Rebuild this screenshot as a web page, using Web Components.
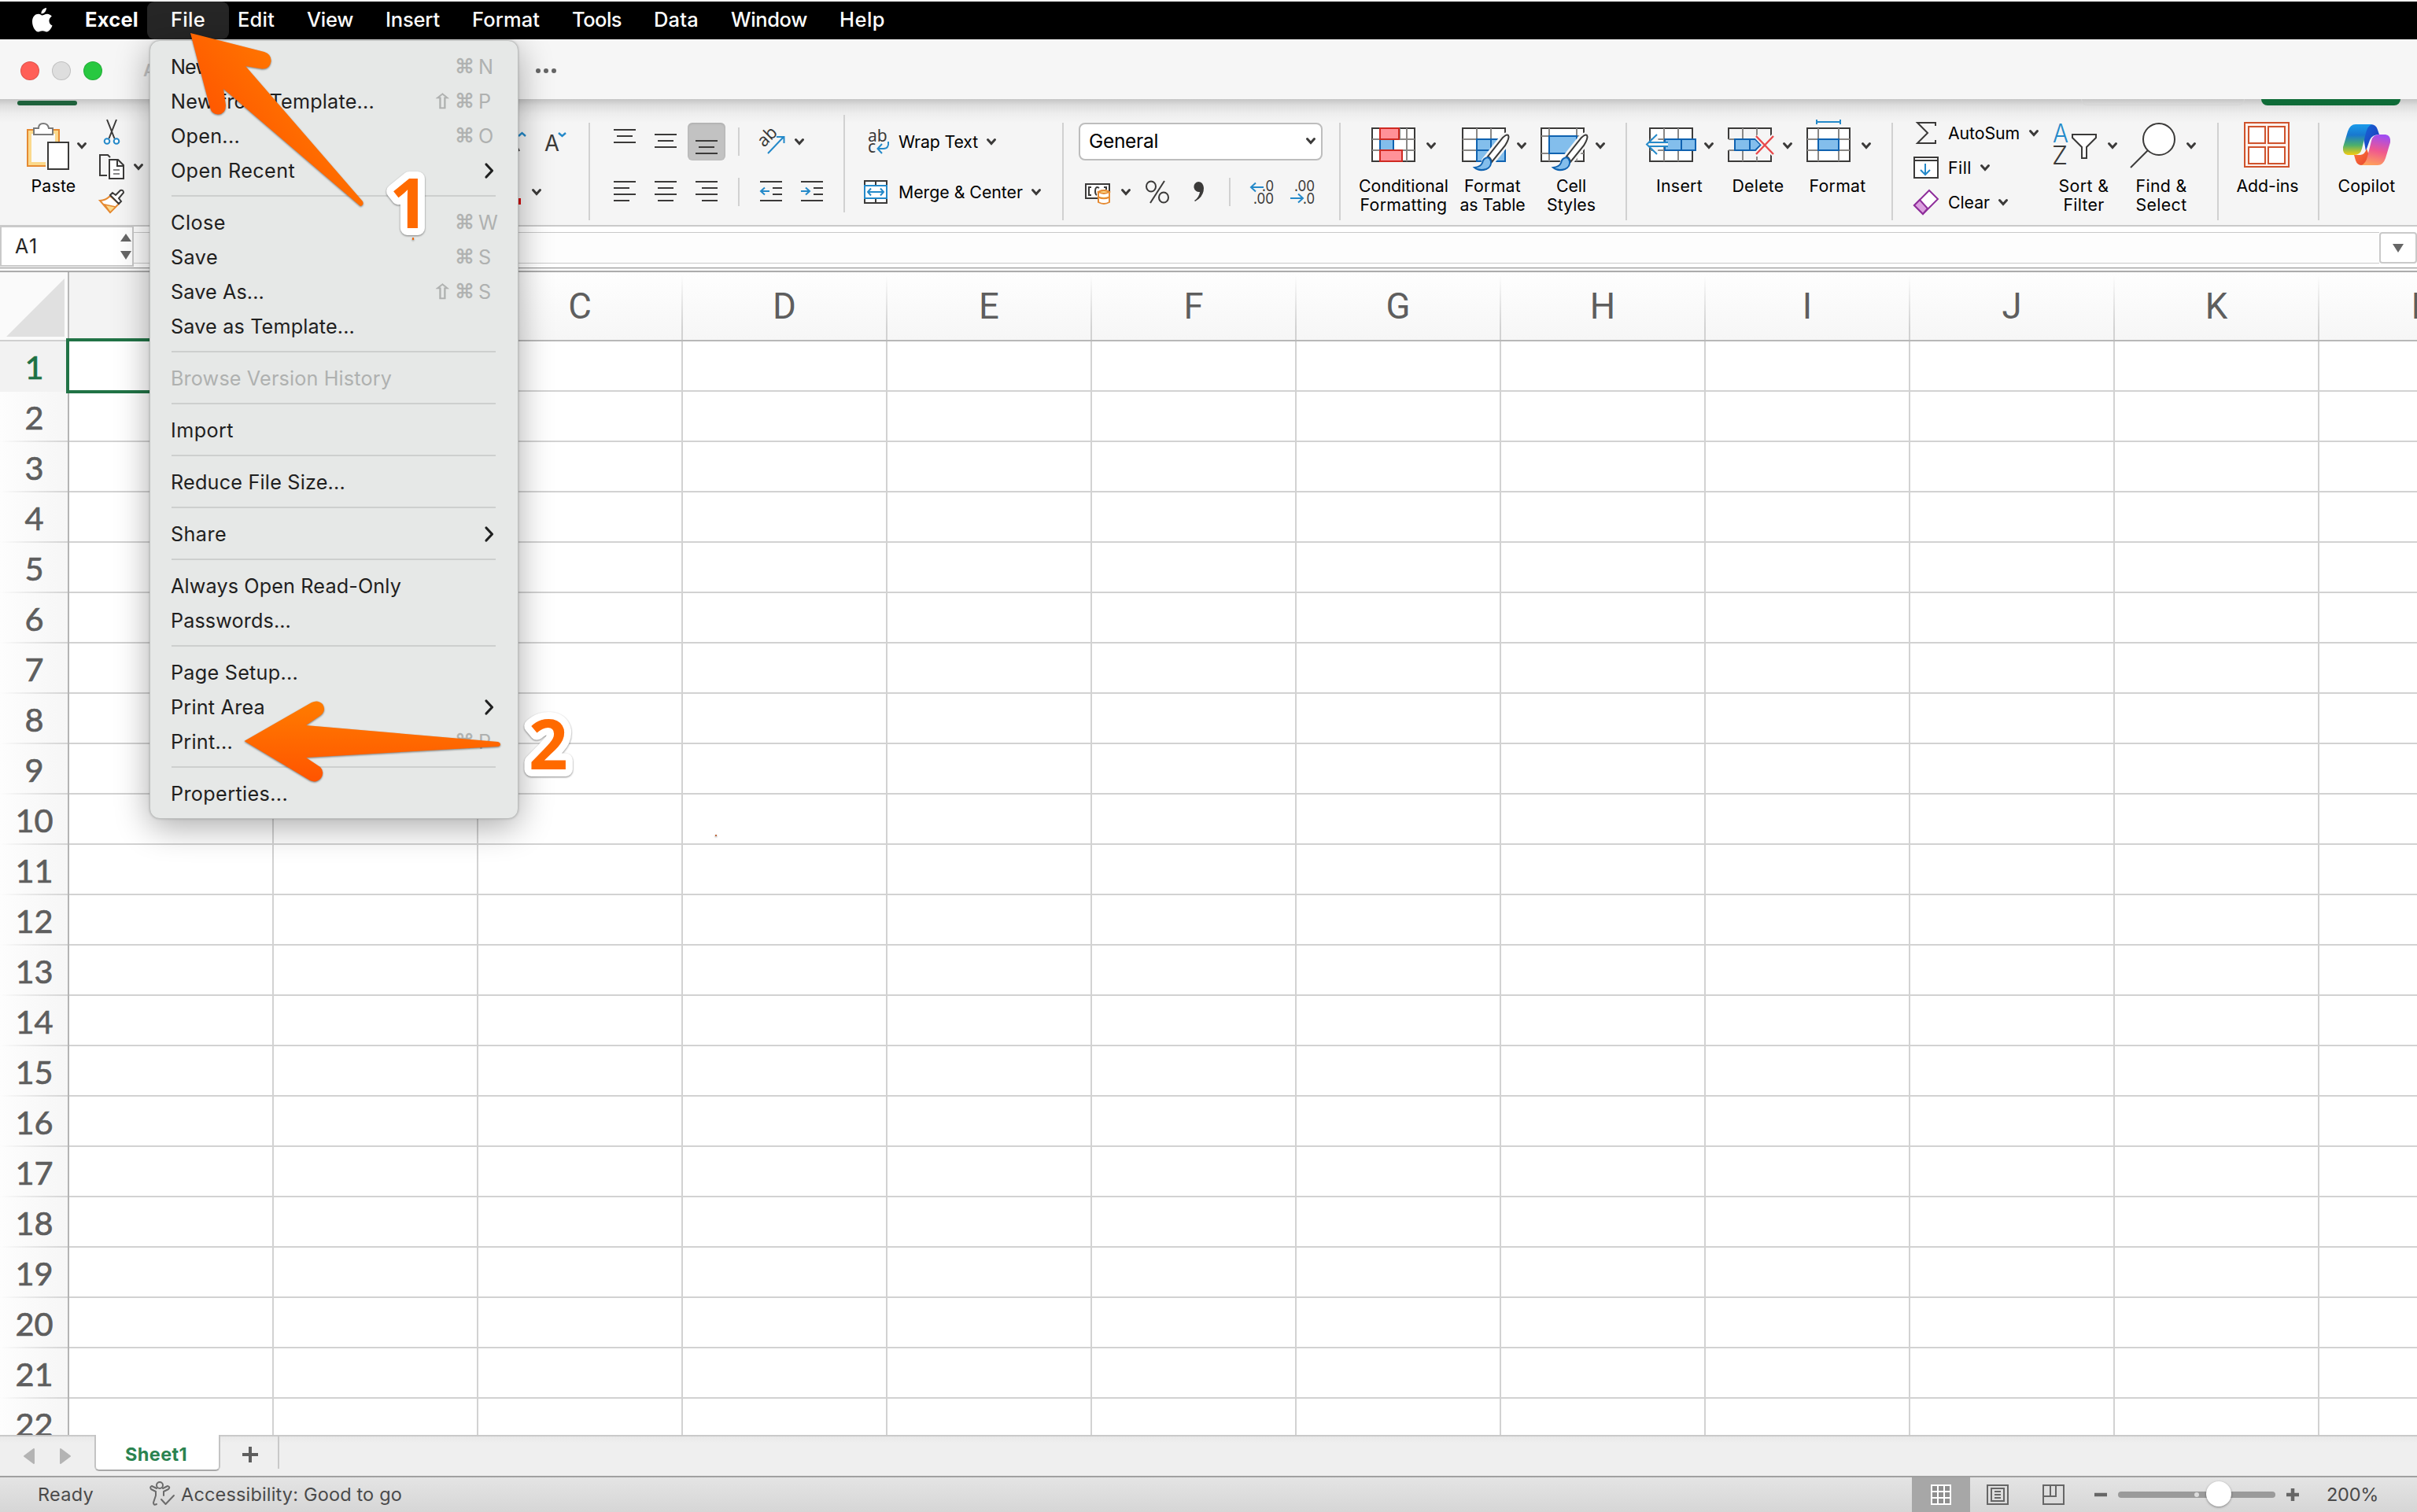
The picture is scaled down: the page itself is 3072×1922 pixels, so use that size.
<!DOCTYPE html>
<html lang="en">
<head>
<meta charset="utf-8">
<title>Excel</title>
<style>
  html, body { margin: 0; padding: 0; }
  body {
    width: 3072px;
    height: 1922px;
    overflow: hidden;
    background: #fff;
    font-family: Inter, "Liberation Sans", sans-serif;
  }
</style>
</head>
<body>
<excel-app></excel-app>

<script>
  // Small base class: every element sets its markup once in an open shadow root
  class BaseElement extends HTMLElement {
    connectedCallback() {
      if (this.shadowRoot) return;
      this.attachShadow({ mode: 'open' });
      this.shadowRoot.innerHTML = this.template();
      this.ready();
    }
    template() { return '<slot></slot>'; }
    ready() {}
  }

  const BLUE = '#2489c9';
  const DARK = '#3b3a39';

  // Lines of the alignment icons, as [x, y, width]
  const bars = (list) => list.map(([x, y, w]) => `<rect x="${x}" y="${y}" width="${w}" height="2" fill="${DARK}"/>`).join('');

  const brush = `
    <path d="M59 20 Q57 17 51 22 L28 51 Q26 55 30 58 L35 60 L38 56 L56 33 Q61 24 59 20Z" fill="#f5f5f5" stroke="#f5f5f5" stroke-width="5"/>
    <path d="M59 20 Q57 18 52 23 L33 47 Q37 49 38 54 L55 33 Q61 23 59 20Z" fill="#fff" stroke="${DARK}" stroke-width="2"/>
    <path d="M33 48 Q27 49 26 55 Q24 60 16 61 Q22 66 31 63 Q38 60 37 53 Q36 49 33 48Z" fill="#83beec" stroke="#0f62b0" stroke-width="2"/>`;

  // name: [width, height, svg markup]
  const ICONS = {
    apple: [28, 32, `<path fill="#fff" d="M19 1 C19 5 16 8.500 12.500 8.500 C12 4.500 15.500 1.200 19 1Z M13.500 10.500 C15 10.500 17 8.700 20 8.700 C22.500 8.700 24.500 10 25.800 11.800 C21 14.500 21.500 21.500 26.500 23.500 C25 27.500 22 31.500 19.300 31.500 C17.300 31.500 16.500 30.300 14 30.300 C11.500 30.300 10.500 31.500 8.700 31.500 C5 31.500 1 25 1 18.500 C1 12 5 8.800 8.800 8.800 C11 8.800 12.500 10.500 13.500 10.500Z"/>`],
    chevron: [12, 8, `<path d="M1.500 1.500 L6 6.500 L10.500 1.500" fill="none" stroke="${DARK}" stroke-width="3" stroke-linecap="round"/>`],
    submenu: [12, 20, `<path d="M2 2 L9.500 10 L2 18" fill="none" stroke="#1f2020" stroke-width="3.200" stroke-linecap="round" stroke-linejoin="round"/>`],
    dots: [28, 8, `<g fill="#666"><circle cx="4" cy="4" r="3"/><circle cx="14" cy="4" r="3"/><circle cx="24" cy="4" r="3"/></g>`],
    paste: [54, 64, `
      <path d="M1 13 H41 V28 H36 V18 H6 V54 H24 V59 H1Z" fill="#fbd98c"/>
      <path d="M6 18 H36 V28 H26 V54 H6Z" fill="#fafafa"/>
      <path d="M41 29 V13 H1 V59 H24" fill="none" stroke="#e58a32" stroke-width="2"/>
      <path d="M9 11 H15 Q15 5 21 5 Q27 5 28 11 H33 V19 H9Z" fill="#fff" stroke="#7a7a7a" stroke-width="2"/>
      <rect x="27" y="29" width="26" height="34" fill="#fff" stroke="${DARK}" stroke-width="2"/>`],
    cut: [20, 32, `
      <path d="M4 0 L13.500 24 M16 0 L6.500 24" stroke="${DARK}" stroke-width="2" fill="none"/>
      <g fill="#fff" stroke="${BLUE}" stroke-width="2"><circle cx="4" cy="27.500" r="3.300"/><circle cx="16" cy="27.500" r="3.300"/></g>`],
    copy: [32, 32, `
      <path d="M10 27 H1 V1 H11 L14 4" fill="none" stroke="${DARK}" stroke-width="2"/>
      <path d="M13 7 H24 L31 14 V31 H13Z M23 7 V15 H31" fill="#fff" stroke="${DARK}" stroke-width="2"/>
      <path d="M18 20 H26 M18 25 H26" stroke="#888" stroke-width="2"/>`],
    painter: [32, 30, `
      <path d="M14 8 L25 18 L14 29 L1 14Q8 14 14 8" fill="#fff" stroke="#e58a32" stroke-width="2"/>
      <path d="M7 19 L21 22 L14 29Z" fill="#fbd98c" stroke="#e58a32" stroke-width="1.500"/>
      <path d="M14 7 L17 4 L21 7 L27 1 Q31 0 31 4 L25 11 L28 15 L25 18Z" fill="#fff" stroke="${DARK}" stroke-width="2"/>`],
    shrink: [28, 26, `<text x="0" y="25" font-family="Inter" font-size="28" textLength="19" lengthAdjust="spacingAndGlyphs" fill="${DARK}">A</text><path d="M18 2 L22.500 6 L27 2" fill="none" stroke="${BLUE}" stroke-width="2.400"/>`],
    grow: [12, 26, `<path d="M0 21 L2 25" stroke="${DARK}" stroke-width="2"/><path d="M1 6 L5.500 2 L10 6" fill="none" stroke="${BLUE}" stroke-width="2.400"/>`],
    alignTop: [28, 48, bars([[0, 8, 28], [4, 16, 20], [0, 24, 28]])],
    alignMiddle: [28, 48, bars([[0, 14, 28], [4, 22, 20], [0, 30, 28]])],
    alignBottom: [28, 48, bars([[0, 22, 28], [4, 30, 20], [0, 38, 28]])],
    alignLeft: [28, 48, bars([[0, 10, 28], [0, 18, 20], [0, 26, 28], [0, 34, 20]])],
    alignCenter: [28, 48, bars([[0, 10, 28], [4, 18, 20], [0, 26, 28], [4, 34, 20]])],
    alignRight: [28, 48, bars([[0, 10, 28], [8, 18, 20], [0, 26, 28], [8, 34, 20]])],
    outdent: [28, 48, bars([[0, 10, 28], [16, 18, 12], [16, 26, 12], [0, 34, 28]]) + `<path d="M12 23 H1 M6 18.500 L1 23 L6 27.500" fill="none" stroke="${BLUE}" stroke-width="2"/>`],
    indent: [28, 48, bars([[0, 10, 28], [16, 18, 12], [16, 26, 12], [0, 34, 28]]) + `<path d="M0 23 H11 M6 18.500 L11 23 L6 27.500" fill="none" stroke="${BLUE}" stroke-width="2"/>`],
    orient: [34, 32, `
      <text x="0" y="0" transform="translate(7,24) rotate(-45)" font-family="Noto Sans" font-size="22" fill="${DARK}">ab</text>
      <path d="M12 31 L32 10 M23 10 H32.500 V18" fill="none" stroke="${BLUE}" stroke-width="2"/>`],
    wrap: [30, 32, `
      <text x="0" y="16" font-family="Noto Sans" font-size="21" fill="${DARK}">ab</text>
      <text x="0" y="30" font-family="Noto Sans" font-size="21" fill="${DARK}">c</text>
      <path d="M26 16 Q27 25 20 25 H13 M18 19 L12.500 25 L18 31" fill="none" stroke="${BLUE}" stroke-width="2"/>`],
    merge: [30, 30, `
      <path d="M1 1 H29 V29 H1Z M15 1 V7 M15 23 V29" fill="#fff" stroke="${DARK}" stroke-width="2"/>
      <rect x="1" y="7" width="28" height="16" fill="#fff" stroke="${BLUE}" stroke-width="2"/>
      <path d="M5 15 H25 M9 10.500 L5 15 L9 19.500 M21 10.500 L25 15 L21 19.500" fill="none" stroke="${BLUE}" stroke-width="2"/>`],
    currency: [32, 28, `
      <rect x="1" y="2" width="30" height="18" fill="#fff" stroke="${DARK}" stroke-width="2"/>
      <path d="M8 6 H5 V16 H8 M24 6 H27 V9 M18 7 Q13 4 13 11 Q13 15 15 16" fill="none" stroke="${DARK}" stroke-width="2"/>
      <path d="M17 12 Q24 8 31 12 V25 Q24 29 17 25Z" fill="#fff" stroke="#e58a32" stroke-width="2"/>
      <path d="M17 12 Q24 16 31 12 Q24 8 17 12Z M17 18.500 Q24 22 31 18.500" fill="#fbd98c" stroke="#e58a32" stroke-width="2"/>`],
    percent: [32, 30, `<g fill="none" stroke="${DARK}" stroke-width="2"><ellipse cx="7" cy="8" rx="6" ry="6.500"/><ellipse cx="23" cy="22" rx="6" ry="6.500"/><path d="M24 1 L6 29"/></g>`],
    comma: [14, 28, `<path d="M7 1 A6.500 6.500 0 1 0 9 14 Q8 21 2 25 L3 26 Q14 20 14 9 Q13 1 7 1Z" fill="${DARK}"/>`],
    moreDecimal: [31, 30, `
      <g font-family="Inter" font-size="19" fill="${DARK}"><text x="16" y="14" textLength="15" lengthAdjust="spacingAndGlyphs">.0</text><text x="5" y="30" textLength="26" lengthAdjust="spacingAndGlyphs">.00</text></g>
      <path d="M18 9 H2 M8 3.500 L2 9 L8 14.500" fill="none" stroke="${BLUE}" stroke-width="2"/>`],
    lessDecimal: [31, 30, `
      <g font-family="Inter" font-size="19" fill="${DARK}"><text x="5" y="14" textLength="26" lengthAdjust="spacingAndGlyphs">.00</text><text x="16" y="30" textLength="15" lengthAdjust="spacingAndGlyphs">.0</text></g>
      <path d="M0 23 H16 M10 17.500 L16 23 L10 28.500" fill="none" stroke="${BLUE}" stroke-width="2"/>`],
    conditional: [56, 64, `
      <rect x="1" y="11" width="54" height="42" fill="#fff" stroke="${DARK}" stroke-width="2"/>
      <path d="M1 25 H55 M1 39 H55 M11 11 V53 M36 11 V25 M45 11 V53" stroke="#8a8886" stroke-width="2"/>
      <rect x="29" y="26" width="15" height="12" fill="#fff"/>
      <rect x="11" y="25" width="17" height="14" fill="#83beec" stroke="#0f62b0" stroke-width="2"/>
      <path d="M11 11 H35 V25 H11Z M11 39 H39 V53 H11Z" fill="#ff9198" stroke="#cf2a22" stroke-width="2"/>`],
    formatTable: [56, 64, `
      <rect x="1" y="11" width="54" height="42" fill="#fff" stroke="${DARK}" stroke-width="2"/>
      <path d="M1 25 H19 M1 39 H19 M19 11 V53 M37 11 V25" stroke="#8a8886" stroke-width="2"/>
      <path d="M19 25 H55 V53 H19Z M19 39 H55 M37 25 V53" fill="#83beec" stroke="#0f62b0" stroke-width="2"/>${brush}`],
    cellStyles: [56, 64, `
      <rect x="1" y="11" width="54" height="42" fill="#fff" stroke="${DARK}" stroke-width="2"/>
      <path d="M1 21 H55 M1 43 H55 M11 11 V53 M46 11 V53" stroke="#8a8886" stroke-width="2"/>
      <rect x="11" y="21" width="35" height="22" fill="#83beec" stroke="#0f62b0" stroke-width="2"/>${brush}`],
    insertCells: [56, 64, `
      <rect x="1" y="11" width="54" height="42" fill="#fff" stroke="${DARK}" stroke-width="2"/>
      <path d="M1 25 H55 M1 39 H55 M19 11 V53 M37 11 V53" stroke="#8a8886" stroke-width="2"/>
      <path d="M20 25 H59 V39 H20Z M41 25 V39" fill="#83beec" stroke="#0f62b0" stroke-width="2"/>
      <path d="M10 18 L-2 31.500 L10 45 L12 35 H24 V28 H12Z" fill="#f5f5f5"/>
      <path d="M24 29 H0 M24 34 H0 M10 19 L-3 31.500 L10 44" fill="none" stroke="${BLUE}" stroke-width="2"/>`],
    deleteCells: [56, 64, `
      <path d="M1 25 V11 H55 V22 M1 39 V53 H55 V44" fill="none" stroke="${DARK}" stroke-width="2"/>
      <path d="M1 25 H37 M1 39 H37 M19 11 V25 M37 11 V25 M19 39 V53 M37 47 V53" stroke="#8a8886" stroke-width="2"/>
      <path d="M9 25 H35 L42 32 L35 39 H9Z M28 25 V39" fill="#83beec" stroke="#0f62b0" stroke-width="2"/>
      <path d="M36 21 L58 44 M58 21 L36 44" stroke="#f5f5f5" stroke-width="6"/>
      <path d="M36 21 L58 44 M58 21 L36 44" stroke="#e8484b" stroke-width="2.400"/>`],
    formatCells: [56, 64, `
      <path d="M13 3 H43 M13 0 V6 M43 0 V6" stroke="${BLUE}" stroke-width="2"/>
      <rect x="1" y="11" width="54" height="42" fill="#fff" stroke="${DARK}" stroke-width="2"/>
      <path d="M1 25 H55 M1 39 H55 M15 11 V53 M41 11 V53" stroke="#8a8886" stroke-width="2"/>
      <rect x="15" y="25" width="26" height="14" fill="#83beec" stroke="#0f62b0" stroke-width="2"/>`],
    sum: [32, 28, `<path d="M28 5 V1 H5 L18 14 L5 27 H28 V23" fill="none" stroke="${DARK}" stroke-width="2"/>`],
    fill: [32, 28, `
      <path d="M1 1 H31 V27 H1Z M1 5 H31" fill="#fff" stroke="${DARK}" stroke-width="2"/>
      <path d="M15 9 V23 M9 17 L15 23 L21 17" fill="none" stroke="${BLUE}" stroke-width="2"/>`],
    clear: [32, 32, `
      <path d="M20 1 L31 12 L12 31 L1 20Z" fill="#fff" stroke="#8f2f9b" stroke-width="2"/>
      <path d="M8 13 L18 24 L12 31 L1 20Z" fill="#dba0df" stroke="#8f2f9b" stroke-width="2"/>`],
    sort: [56, 64, `
      <text x="0" y="29" font-family="Inter" font-size="32" font-weight="300" textLength="20" lengthAdjust="spacingAndGlyphs" fill="${BLUE}">A</text>
      <text x="-1" y="57" font-family="Inter" font-size="32" font-weight="300" textLength="20" lengthAdjust="spacingAndGlyphs" fill="${DARK}">Z</text>
      <path d="M25 19 H55 V23 L43 35 V49 H37 V35 L25 23Z" fill="#fff" stroke="${DARK}" stroke-width="2"/>`],
    find: [58, 64, `
      <circle cx="37" cy="25" r="20" fill="#fff" stroke="${DARK}" stroke-width="2"/>
      <path d="M23 39 L1 61" stroke="${DARK}" stroke-width="2"/>`],
    addins: [58, 64, `
      <g fill="#fdf1ec" stroke="#cf532d" stroke-width="2"><rect x="1" y="4" width="56" height="56"/>
      <path fill="#fff" d="M6 9 H27 V30 H6Z M31 9 H52 V30 H31Z M6 35 H27 V56 H6Z M31 35 H52 V56 H31Z"/></g>`],
    copilot: [60, 64, `
      <defs>
        <linearGradient id="l" x1="0" y1="0" x2="0" y2="1"><stop offset="0" stop-color="#1a9bea"/><stop offset=".35" stop-color="#1878cf"/><stop offset=".68" stop-color="#4caf6c"/><stop offset="1" stop-color="#f5cc10"/></linearGradient>
        <linearGradient id="r" x1=".5" y1="0" x2=".3" y2="1"><stop offset="0" stop-color="#a24df0"/><stop offset=".5" stop-color="#f0588f"/><stop offset="1" stop-color="#ffa25a"/></linearGradient>
        <linearGradient id="t" x1="0" y1="0" x2="1" y2="1"><stop offset="0" stop-color="#1668d6"/><stop offset="1" stop-color="#1f35bb"/></linearGradient>
        <linearGradient id="b" x1="0" y1="0" x2="1" y2="1"><stop offset="0" stop-color="#ff7a3c"/><stop offset="1" stop-color="#e6432f"/></linearGradient>
      </defs>
      <g transform="translate(0,6)">
        <path fill="url(#t)" d="M28 0 H35 Q42 0 44 7 L46 13 Q37 13 34 20 L29 34 L25 12Z"/>
        <path fill="url(#b)" d="M14 39 H22 Q28 38 30 31 L34 42 L30 52 H24 Q18 52 16 46Z"/>
        <path fill="url(#l)" d="M16 0 H37 Q31 2 29 11 L24 31 Q22 39 14 39 H6 Q-1 38 0 29 L6 9 Q9 0 16 0Z"/>
        <path fill="url(#r)" d="M44 52 H23 Q29 50 31 41 L36 21 Q38 13 46 13 H54 Q61 14 60 23 L54 43 Q51 52 44 52Z"/>
      </g>`],
    up: [14, 10, `<path d="M7 0 L14 10 H0Z" fill="#666"/>`],
    down: [14, 11, `<path d="M0 0 H14 L7 11Z" fill="#666"/>`],
    prev: [14, 20, `<path d="M13 1 V19 L1 10Z" fill="#b4b4b4" stroke="#b4b4b4" stroke-width="2" stroke-linejoin="round"/>`],
    next: [14, 20, `<path d="M1 1 V19 L13 10Z" fill="#b4b4b4" stroke="#b4b4b4" stroke-width="2" stroke-linejoin="round"/>`],
    plus: [20, 20, `<path d="M10 0 V20 M0 10 H20" stroke="#5e5e5e" stroke-width="4"/>`],
    zoomIn: [16, 16, `<path d="M8 0 V16 M0 8 H16" stroke="#666" stroke-width="4.500"/>`],
    zoomOut: [16, 16, `<path d="M0 8 H16" stroke="#666" stroke-width="4.500"/>`],
    person: [32, 32, `
      <g fill="none" stroke="#6b6b6b" stroke-width="2" stroke-linecap="round" stroke-linejoin="round">
      <circle cx="13" cy="5" r="4"/>
      <path d="M9 9 L3 6 Q0 7 2 10 L8 13 V18 L5 27 Q5 31 9 29 M17 9 L23 6 Q27 7 24 10 L18 13 V18"/>
      <path d="M15 23 L20.500 29 L31 18"/></g>`],
    normalView: [26, 26, `<rect x="1" y="1" width="24" height="24" rx="1" fill="#8e8e8e"/><path d="M1 1 H25 V25 H1Z M1 9 H25 M1 17 H25 M9 1 V25 M17 1 V25" fill="none" stroke="#fff" stroke-width="2"/>`],
    layoutView: [28, 26, `<path d="M1 1 H27 V25 H1Z M6 5 H22 V21 H6Z M10 9 H18 M10 13 H18 M10 17 H18" fill="none" stroke="#666" stroke-width="2"/>`],
    breakView: [28, 26, `<path d="M1 1 H27 V25 H1Z M10 1 V14 M1 15 H17 V1" fill="none" stroke="#666" stroke-width="2"/>`]
  };

  class UiIcon extends BaseElement {
    template() {
      const [w, h, art] = ICONS[this.getAttribute('name')];
      return `
        <style>
          :host { display: block; flex: none; width: ${w}px; height: ${h}px; }
          svg { display: block; overflow: visible; }
        </style>
        <svg width="${w}" height="${h}" viewBox="0 0 ${w} ${h}">${art}</svg>`;
    }
  }

  // Text label. The w attribute is its measured width; tracking is adjusted to reach it.
  class UiLabel extends BaseElement {
    template() {
      return `
        <style>
          :host { display: block; flex: none; white-space: nowrap; width: max-content; }
        </style>
        <slot></slot>`;
    }
    ready() {
      const width = Number(this.getAttribute('w'));
      if (!width) return;
      const natural = this.getBoundingClientRect().width;
      this.style.letterSpacing = ((width - natural) / this.textContent.length).toFixed(3) + 'px';
      this.style.width = width + 'px';
    }
  }

  class MacMenuBar extends BaseElement {
    template() {
      const items = [['File', 44], ['Edit', 47], ['View', 59], ['Insert', 69], ['Format', 86], ['Tools', 63], ['Data', 57], ['Window', 97], ['Help', 58]];
      return `
        <style>
          :host { display: flex; align-items: center; gap: 41px; height: 48px; border-top: 2px solid #f2f2f2; background: #000; color: #fff; font-size: 25.500px; font-weight: 500; line-height: 46px; }
          ui-icon { margin: -2px 0 0 40px; }
          .app { font-weight: 700; margin: -2px 0 0 -1px; }
          .item { height: 48px; }
          .open { padding: 0 30px; margin: 0 -30px; background: #262626; border-radius: 9px; }
        </style>
        <ui-icon name="apple"></ui-icon>
        <ui-label class="app" w="68">Excel</ui-label>
        ${items.map(([text, w], i) => `<div class="item ${i ? '' : 'open'}"><ui-label w="${w}">${text}</ui-label></div>`).join('')}`;
    }
  }

  class TitleBar extends BaseElement {
    template() {
      return `
        <style>
          :host { display: flex; align-items: center; height: 76px; background: #f6f6f6; }
          i { width: 22px; height: 22px; border-radius: 50%; border: 1px solid #0002; margin-right: 16px; }
          .lights { display: flex; padding: 4px 0 0 26px; width: 156px; }
          .auto { width: 498px; font-size: 22px; font-weight: 600; color: #c4c4c4; padding-top: 2px; }
        </style>
        <div class="lights"><i style="background:#ff5f57"></i><i style="background:#dedede"></i><i style="background:#28c840"></i></div>
        <div class="auto">A</div>
        <ui-icon name="dots" style="margin-top:3px"></ui-icon>`;
    }
  }

  // Large ribbon button: icon and arrow over a centred caption
  class RibbonButton extends BaseElement {
    template() {
      const arrow = this.hasAttribute('arrow');
      return `
        <style>
          :host { display: flex; flex: none; flex-direction: column; align-items: center; padding-top: 6px; }
          .top { display: flex; align-items: center; gap: ${this.getAttribute('gap') || 14}px; height: 64px; }
          .top ui-icon + ui-icon { margin-top: 2px; }
          .caption { display: flex; flex-direction: column; align-items: center; width: 0; margin-top: 8px; line-height: 24px; font-size: 21.300px; margin-left: ${this.getAttribute('shift') || 0}px; }
        </style>
        <div class="top"><ui-icon name="${this.getAttribute('icon')}"></ui-icon>${arrow ? '<ui-icon name="chevron"></ui-icon>' : ''}</div>
        <div class="caption"><slot></slot></div>`;
    }
  }

  class RibbonBar extends BaseElement {
    template() {
      const at = (x) => `style="margin-left:${x}px"`;
      return `
        <style>
          :host { display: block; height: 160px; border-bottom: 2px solid #cacaca; background: linear-gradient(#c4c4c4, #dedede 8px, #ededed 18px, #f5f5f5 30px); color: #000; font-size: 21.300px; font-weight: 400; }
          .tabs { display: flex; height: 20px; align-items: flex-start; }
          .tabs b { height: 6px; width: 76px; margin: 2px 0 0 22px; border-radius: 3px; background: #1e613b; }
          .tabs .comments { width: 206px; height: 7px; margin: 0 0 0 2547px; border: 1px solid #d4d4d4; border-top: 0; border-radius: 0 0 12px 12px; }
          .tabs .share { width: 177px; height: 8px; margin: 0 0 0 21px; background: #0e6b37; border-radius: 0 0 10px 10px; }
          .groups, .group, .row { display: flex; }
          .group { flex: none; box-sizing: border-box; height: 138px; }
          .rows { flex-direction: column; padding-top: 10px; gap: 16px; }
          .row { height: 48px; align-items: center; }
          .sep { flex: none; width: 2px; height: 124px; margin-top: 10px; background: #d1d1d1; }
          .sep.high { margin-top: 0; }
          .mini { width: 2px; height: 36px; background: #d1d1d1; }
          .clip { display: flex; flex-direction: column; padding-top: 6px; gap: 12px; }
          .clip .row { height: 32px; }
          .on { background: #c2c2c2; border-radius: 6px; padding: 0 10px; height: 48px; box-shadow: inset 0 1px 3px #0002; }
          .select { display: flex; align-items: center; box-sizing: border-box; width: 310px; height: 48px; border: 2px solid #bdbdbd; border-radius: 8px; background: #fff; padding: 0 7px 2px 11px; justify-content: space-between; font-size: 24.500px; }
          .edit { display: flex; flex-direction: column; width: 203px; padding-top: 1px; }
          .edit .row { height: 44px; }
          .edit ui-label { margin-top: -1px; }
          .red { width: 4px; height: 8px; background: #d80f10; margin-top: 24px; }
        </style>
        <div class="tabs"><b></b><span class="comments"></span><span class="share"></span></div>
        <div class="groups">
          <div class="group" style="width:748px">
            <ribbon-button icon="paste" arrow gap="10" shift="-8" ${at(34)}><ui-label w="57">Paste</ui-label></ribbon-button>
            <div class="clip" ${at(16)}>
              <div class="row"><ui-icon name="cut" ${at(6)}></ui-icon></div>
              <div class="row"><ui-icon name="copy"></ui-icon><ui-icon name="chevron" ${at(12)}></ui-icon></div>
              <div class="row"><ui-icon name="painter"></ui-icon></div>
            </div>
            <div class="group rows" ${at(476)}>
              <div class="row"><ui-icon name="grow"></ui-icon><ui-icon name="shrink" ${at(22)}></ui-icon></div>
              <div class="row"><span class="red"></span><ui-icon name="chevron" ${at(14)}></ui-icon></div>
            </div>
          </div>
          <div class="sep"></div>
          <div class="group rows" style="width:322px;padding-left:30px">
            <div class="row">
              <ui-icon name="alignTop"></ui-icon><ui-icon name="alignMiddle" ${at(24)}></ui-icon>
              <div class="on" ${at(14)}><ui-icon name="alignBottom"></ui-icon></div>
              <span class="mini" ${at(16)}></span>
              <ui-icon name="orient" ${at(24)}></ui-icon><ui-icon name="chevron" ${at(12)}></ui-icon>
            </div>
            <div class="row">
              <ui-icon name="alignLeft"></ui-icon><ui-icon name="alignCenter" ${at(24)}></ui-icon><ui-icon name="alignRight" ${at(24)}></ui-icon>
              <span class="mini" ${at(26)}></span>
              <ui-icon name="outdent" ${at(26)}></ui-icon><ui-icon name="indent" ${at(24)}></ui-icon>
            </div>
          </div>
          <div class="sep high"></div>
          <div class="group rows" style="width:276px;padding-left:24px">
            <div class="row"><ui-icon name="wrap" ${at(5)}></ui-icon><ui-label w="101" ${at(9)}>Wrap Text</ui-label><ui-icon name="chevron" ${at(11)}></ui-icon></div>
            <div class="row"><ui-icon name="merge"></ui-icon><ui-label w="158" ${at(14)}>Merge &amp; Center</ui-label><ui-icon name="chevron" ${at(11)}></ui-icon></div>
          </div>
          <div class="sep"></div>
          <div class="group rows" style="width:350px;padding-left:19px">
            <div class="row"><div class="select"><ui-label w="88">General</ui-label><ui-icon name="chevron"></ui-icon></div></div>
            <div class="row">
              <ui-icon name="currency" style="margin:4px 0 0 8px"></ui-icon><ui-icon name="chevron" ${at(14)}></ui-icon>
              <ui-icon name="percent" ${at(19)}></ui-icon><ui-icon name="comma" ${at(28)}></ui-icon>
              <span class="mini" ${at(32)}></span>
              <ui-icon name="moreDecimal" ${at(24)}></ui-icon><ui-icon name="lessDecimal" ${at(21)}></ui-icon>
            </div>
          </div>
          <div class="sep"></div>
          <div class="group" style="width:362px;padding-left:39px">
            <ribbon-button icon="conditional" arrow><ui-label w="114">Conditional</ui-label><ui-label w="111">Formatting</ui-label></ribbon-button>
            <ribbon-button icon="formatTable" arrow shift="-4" ${at(33)}><ui-label w="72">Format</ui-label><ui-label w="83">as Table</ui-label></ribbon-button>
            <ribbon-button icon="cellStyles" arrow shift="-4" ${at(18)}><ui-label w="38">Cell</ui-label><ui-label w="62">Styles</ui-label></ribbon-button>
          </div>
          <div class="sep"></div>
          <div class="group" style="width:336px;padding-left:28px">
            <ribbon-button icon="insertCells" arrow shift="-5"><ui-label w="59">Insert</ui-label></ribbon-button>
            <ribbon-button icon="deleteCells" arrow shift="-5" ${at(18)}><ui-label w="66">Delete</ui-label></ribbon-button>
            <ribbon-button icon="formatCells" arrow shift="-3" ${at(18)}><ui-label w="72">Format</ui-label></ribbon-button>
          </div>
          <div class="sep"></div>
          <div class="group" style="width:412px">
            <div class="edit">
              <div class="row"><ui-icon name="sum" ${at(26)}></ui-icon><ui-label w="91" ${at(12)}>AutoSum</ui-label><ui-icon name="chevron" ${at(12)}></ui-icon></div>
              <div class="row"><ui-icon name="fill" ${at(26)}></ui-icon><ui-label w="30" ${at(12)}>Fill</ui-label><ui-icon name="chevron" ${at(11)}></ui-icon></div>
              <div class="row"><ui-icon name="clear" ${at(26)}></ui-icon><ui-label w="53" ${at(12)}>Clear</ui-label><ui-icon name="chevron" ${at(11)}></ui-icon></div>
            </div>
            <ribbon-button icon="sort" arrow shift="-3"><ui-label w="64">Sort &amp;</ui-label><ui-label w="52">Filter</ui-label></ribbon-button>
            <ribbon-button icon="find" arrow shift="-4" ${at(16)}><ui-label w="65">Find &amp;</ui-label><ui-label w="65">Select</ui-label></ribbon-button>
          </div>
          <div class="sep"></div>
          <div class="group" style="width:126px;padding-left:32px">
            <ribbon-button icon="addins" shift="2"><ui-label w="79">Add-ins</ui-label></ribbon-button>
          </div>
          <div class="sep"></div>
          <div class="group" style="width:124px;padding-left:30px">
            <ribbon-button icon="copilot"><ui-label w="73">Copilot</ui-label></ribbon-button>
          </div>
        </div>`;
    }
  }

  class FormulaBar extends BaseElement {
    template() {
      return `
        <style>
          :host { display: flex; align-items: flex-start; height: 52px; background: #fff; }
          .name { display: flex; align-items: center; justify-content: space-between; box-sizing: border-box; width: 170px; height: 51px; border: 2px solid #c9c9c9; border-top-width: 1px; padding: 0 1px 0 17px; font-size: 25px; color: #262626; }
          .steps { display: flex; flex-direction: column; gap: 12px; }
          .input { flex: 1; height: 38px; margin-top: 7px; border: 1px solid #c9c9c9; border-width: 1px 0; background: #fdfdfd; }
          .drop { display: flex; align-items: center; justify-content: center; box-sizing: border-box; width: 48px; height: 40px; margin-top: 7px; border: 2px solid #c9c9c9; border-radius: 4px; padding-right: 1px; }
        </style>
        <div class="name"><ui-label w="30">A1</ui-label><div class="steps"><ui-icon name="up"></ui-icon><ui-icon name="down"></ui-icon></div></div>
        <div class="input"></div>
        <div class="drop"><ui-icon name="down"></ui-icon></div>`;
    }
  }

  class SheetGrid extends BaseElement {
    template() {
      const columns = 'ABCDEFGHIJKL'.split('');
      const rows = Array.from({ length: 22 }, (_, i) => i + 1);
      return `
        <style>
          :host { display: block; height: 1484px; overflow: hidden; background: #fff; color: #5e5e5e; font-family: Lato, sans-serif; }
          .line { height: 6px; background: linear-gradient(#9a9a9a 1px, #e4e4e4 1px 2px, #fff 2px 3px, #ececec 3px 4px, #c4c4c4 4px 5px, #9a9a9a 5px); }
          .row { display: flex; width: 3400px; }
          .head { height: 88px; font-family: Roboto, sans-serif; font-size: 45.500px; }
          .corner { box-sizing: border-box; width: 88px; height: 88px; border-right: 2px solid #b8b8b8; border-bottom: 2px solid #cfcfcf; background: #fafafa; padding: 8px 0 0 8px; }
          .corner i { display: block; width: 74px; height: 74px; background: #e0e0e0; clip-path: polygon(100% 0, 100% 100%, 0 100%); }
          .col { box-sizing: border-box; width: 260px; height: 88px; padding-right: 2px; text-align: center; line-height: 88px; background: linear-gradient(#b8b8b8, #b8b8b8) 0 86px / 100% 2px no-repeat, linear-gradient(#fff0 5%, #d2d2d2 80%) 258px 0 / 2px 100% no-repeat, linear-gradient(#fefefe, #f6f6f6); }
          .col.sel { background: #f3f3f3; }
          .num { box-sizing: border-box; width: 88px; height: 64px; border-right: 2px solid #b4b4b4; text-align: center; line-height: 65px; font-size: 41.500px; padding-left: 1px; -webkit-text-stroke: .7px currentColor; background: linear-gradient(90deg, #fff0, #d4d4d4) 0 62px / 100% 2px no-repeat, linear-gradient(90deg, #fdfdfd, #f6f6f6); }
          .num.sel { color: #1e7145; background: #f2f2f2; }
          .cell { box-sizing: border-box; width: 260px; height: 64px; border: 2px solid #d2d2d2; border-width: 0 2px 2px 0; }
          .cell.active { position: relative; }
          .cell.active::after { content: ""; position: absolute; inset: -4px; border: 4px solid #217346; }
        </style>
        <div class="line"></div>
        <div class="row head"><div class="corner"><i></i></div>${columns.map((c, i) => `<div class="col ${i ? '' : 'sel'}">${c}</div>`).join('')}</div>
        ${rows.map((n) => `<div class="row"><div class="num ${n === 1 ? 'sel' : ''}">${n}</div>${columns.map((c, i) => `<div class="cell ${n === 1 && !i ? 'active' : ''}"></div>`).join('')}</div>`).join('')}`;
    }
  }

  class SheetTabs extends BaseElement {
    template() {
      return `
        <style>
          :host { display: flex; align-items: flex-start; box-sizing: border-box; height: 52px; border-top: 2px solid #c9c9c9; background: linear-gradient(#e8e8e8, #efefef 8px); }
          .nav { display: flex; gap: 32px; width: 90px; padding: 15px 0 0 30px; }
          .tab { box-sizing: border-box; width: 160px; height: 46px; margin-top: -2px; border: 2px solid #c4c4c4; border-top: 0; border-bottom-color: #a9a9a9; border-radius: 0 0 6px 6px; background: #fff; color: #2b8350; font-size: 23.500px; font-weight: 700; line-height: 50px; padding-left: 37px; }
          .add { width: 45px; height: 28px; padding: 13px 0 0 28px; border-right: 2px solid #c9c9c9; }
        </style>
        <div class="nav"><ui-icon name="prev"></ui-icon><ui-icon name="next"></ui-icon></div>
        <div class="tab"><ui-label w="79">Sheet1</ui-label></div>
        <div class="add"><ui-icon name="plus"></ui-icon></div>`;
    }
  }

  class StatusBar extends BaseElement {
    template() {
      return `
        <style>
          :host { display: flex; align-items: center; box-sizing: border-box; height: 46px; border-top: 2px solid #a0a0a0; background: linear-gradient(#e4e4e4, #d6d6d6); color: #4a4a4a; font-size: 23.500px; }
          ui-label { margin-top: -2px; }
          .view { display: flex; align-items: center; justify-content: center; width: 74px; height: 44px; background: #a7a7a7; margin-left: auto; }
          .track { position: relative; width: 200px; height: 8px; border-radius: 4px; background: #9a9a9a; margin: 0 14px; }
          .track i { position: absolute; left: 97px; top: 1px; width: 6px; height: 6px; border-radius: 50%; background: #dcdcdc; }
          .track b { position: absolute; left: 112px; top: -13px; width: 32px; height: 32px; border-radius: 50%; background: #fff; box-shadow: 0 1px 3px #0006; }
        </style>
        <ui-label w="71" style="margin-left:48px">Ready</ui-label>
        <ui-icon name="person" style="margin:-2px 0 0 71px"></ui-icon>
        <ui-label w="281" style="margin-left:8px">Accessibility: Good to go</ui-label>
        <div class="view"><ui-icon name="normalView"></ui-icon></div>
        <ui-icon name="layoutView" style="margin-left:21px"></ui-icon>
        <ui-icon name="breakView" style="margin-left:43px"></ui-icon>
        <ui-icon name="zoomOut" style="margin-left:38px"></ui-icon>
        <div class="track"><i></i><b></b></div>
        <ui-icon name="zoomIn"></ui-icon>
        <ui-label w="66" style="margin-right:49px;margin-left:35px">200%</ui-label>`;
    }
  }

  class FileMenu extends BaseElement {
    template() {
      // [label, width, keys or '>' for a submenu, disabled]
      const items = [
        ['New', 51, '⌘N'], ['New from Template...', 259, '⇧⌘P'], ['Open...', 88, '⌘O'], ['Open Recent', 158, '>'], null,
        ['Close', 70, '⌘W'], ['Save', 60, '⌘S'], ['Save As...', 119, '⇧⌘S'], ['Save as Template...', 234], null,
        ['Browse Version History', 281, '', true], null,
        ['Import', 80], null,
        ['Reduce File Size...', 222], null,
        ['Share', 71, '>'], null,
        ['Always Open Read-Only', 293], ['Passwords...', 153], null,
        ['Page Setup...', 162], ['Print Area', 120, '>'], ['Print...', 79, '⌘P'], null,
        ['Properties...', 149]
      ];
      const keys = (text) => {
        if (!text) return '';
        if (text === '>') return '<ui-icon name="submenu"></ui-icon>';
        return `<div class="keys">${text.split('').map((k) => `<span class="${k === '⌘' ? 'cmd' : k === '⇧' ? 'shift' : 'key'}">${k}</span>`).join('')}</div>`;
      };
      return `
        <style>
          :host { display: block; box-sizing: border-box; width: 469px; height: 990px; padding: 10px 28px 10px 27px; border: 1px solid #bdbfbe; border-radius: 13px; background: #e6e8e7; color: #1f2020; font-size: 25.200px; box-shadow: 0 10px 44px #0005, 0 0 3px #0003; }
          .item { display: flex; align-items: center; justify-content: space-between; box-sizing: border-box; height: 44px; padding: 1px 2px 0 0; }
          ui-label { margin-left: -1px; }
          .off { color: #afb1b0; }
          hr { height: 2px; margin: 10px 0; border: 0; background: #cdcfce; }
          .keys { display: flex; align-items: center; color: #afb1b0; width: 51px; margin-right: -2px; justify-content: flex-end; }
          .keys span { flex: none; }
          .cmd { width: 29px; font-family: "DejaVu Sans"; font-size: 25px; text-indent: -1px; -webkit-text-stroke: .5px currentColor; }
          .shift { width: 27px; font-family: "DejaVu Sans"; font-size: 26px; transform: scaleX(1.250); transform-origin: 50% 50%; -webkit-text-stroke: .4px currentColor; }
          .key { width: 22px; }
        </style>
        ${items.map((item) => item ? `<div class="item ${item[3] ? 'off' : ''}"><ui-label w="${item[1]}">${item[0]}</ui-label>${keys(item[2])}</div>` : '<hr>').join('')}`;
    }
  }

  // Orange arrows and step numbers that lie over the window
  class StepMarks extends BaseElement {
    template() {
      return `
        <style>
          :host { display: block; pointer-events: none; }
          svg { display: block; filter: drop-shadow(0 1px 1px #0007); }
          text { font-family: "Open Sans"; font-weight: 700; font-size: 87px; fill: #ff6a00; stroke: #fff; stroke-width: 18px; stroke-linejoin: round; paint-order: stroke; }
        </style>
        <svg width="1000" height="1100" viewBox="0 0 1000 1100">
          <defs>
            <linearGradient id="a" x1="0" y1=".4" x2=".5" y2="0"><stop offset="0" stop-color="#ff5500"/><stop offset="1" stop-color="#ff7a00"/></linearGradient>
            <linearGradient id="b" x1="0" y1="0" x2="0" y2="1"><stop offset="0" stop-color="#ff7c00"/><stop offset="1" stop-color="#ff5400"/></linearGradient>
          </defs>
          <path fill="url(#a)" d="M242 42 L336 66 Q345 69 344.500 78 Q343 88 333 87.500 L312 84 L461 256 Q463 261 458 262 L284 113 L287 134 Q287 145 277 145.500 Q269 145 267 137Z"/>
          <path fill="url(#b)" d="M310.500 942 L396 893 Q404 889 410 895 Q415 903 408 909 L389 922 L633 943 Q636 944 636 946 Q636 949 632 949 L389 963 L407 975 Q413 981 408 989 Q402 996 394 992Z"/>
          <text x="495" y="290">1</text>
          <text x="672" y="978">2</text>
          <rect x="524" y="302" width="2" height="3" fill="#f06a10"/>
          <rect x="909" y="1061" width="2" height="2" fill="#c06a40"/>
        </svg>`;
    }
  }

  class ExcelApp extends BaseElement {
    template() {
      return `
        <style>
          :host { display: flex; flex-direction: column; position: relative; width: 3072px; height: 1922px; overflow: hidden; }
          file-menu { position: absolute; left: 190px; top: 51px; }
          step-marks { position: absolute; left: 0; top: 0; }
        </style>
        <mac-menu-bar></mac-menu-bar>
        <title-bar></title-bar>
        <ribbon-bar></ribbon-bar>
        <formula-bar></formula-bar>
        <sheet-grid></sheet-grid>
        <sheet-tabs></sheet-tabs>
        <status-bar></status-bar>
        <file-menu></file-menu>
        <step-marks></step-marks>`;
    }
  }

  customElements.define('ui-icon', UiIcon);
  customElements.define('ui-label', UiLabel);
  customElements.define('mac-menu-bar', MacMenuBar);
  customElements.define('title-bar', TitleBar);
  customElements.define('ribbon-button', RibbonButton);
  customElements.define('ribbon-bar', RibbonBar);
  customElements.define('formula-bar', FormulaBar);
  customElements.define('sheet-grid', SheetGrid);
  customElements.define('sheet-tabs', SheetTabs);
  customElements.define('status-bar', StatusBar);
  customElements.define('file-menu', FileMenu);
  customElements.define('step-marks', StepMarks);
  customElements.define('excel-app', ExcelApp);
</script>
</body>
</html>
